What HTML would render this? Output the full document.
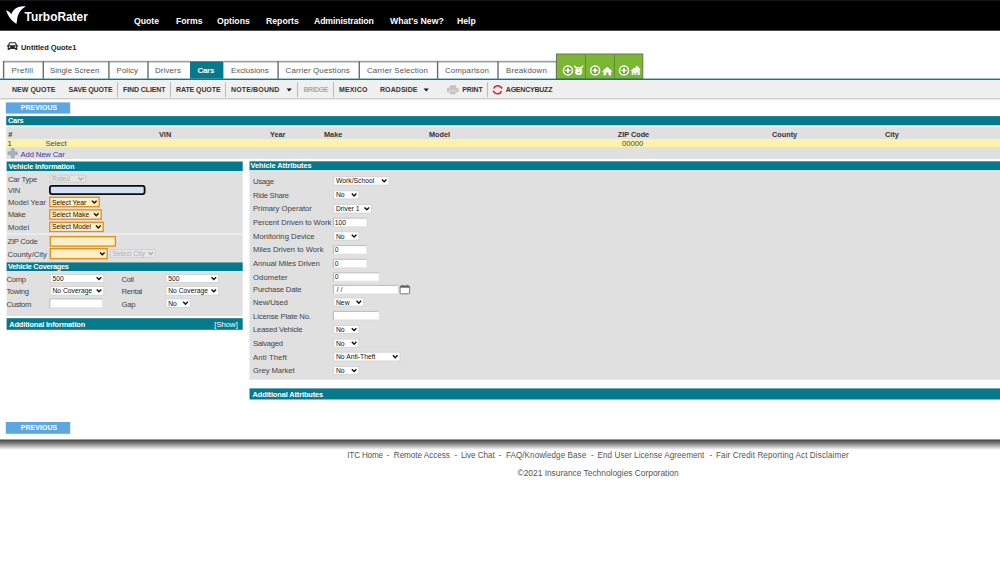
<!DOCTYPE html>
<html lang="en">
<head>
<meta charset="utf-8">
<title>TurboRater - Cars</title>
<style>
*{box-sizing:border-box;margin:0;padding:0}
html,body{width:1000px;height:570px;overflow:hidden;background:#fff}
body{position:relative;font-family:"Liberation Sans",sans-serif;font-size:8px;color:#333}
.a{position:absolute;white-space:nowrap;line-height:12px;height:12px}
#bg{left:0;top:0;height:570px}
#brand{left:24.6px;top:10px;color:#fff;font-weight:bold;font-size:11.9px;line-height:14px;height:14px}
.nav{top:14.7px;color:#fff;font-size:8.7px;font-weight:bold}
#qtitle{left:21px;top:41.8px;font-size:7.45px;font-weight:bold;color:#222}
.tab{top:64.5px;color:#555;font-size:7.9px}
.tab.on{color:#fff;font-weight:bold}
.tb{top:84.1px;font-size:7px;font-weight:bold;color:#333}
.prev{width:64.4px;color:#fff;font-size:6.9px;font-weight:bold;text-align:center}
.hd{color:#fff;font-weight:bold;font-size:7.4px}
.lb{font-size:7.7px;color:#444}
.th{font-size:7.3px;color:#333;font-weight:bold}
.ct{font-size:6.75px;color:#111}
.ft{font-size:8.15px;color:#555}
</style>
</head>
<body>
<svg class="a" id="bg" width="1000" height="570" viewBox="0 0 1000 570">
<rect x="0" y="0" width="1000" height="30.7" fill="#000"/>
<rect x="0" y="0" width="1000" height="1" fill="#141414"/>
<path d="M6.1 10.3C8.2 11 10.2 12.4 11.4 14.3C12.8 10.2 17 5.5 25.7 6.5C22 8.6 19.3 11.8 18 15.2C17 18 17.3 20.9 16.3 23.9C11.5 20.8 7.7 16 6.1 10.3Z" fill="#fff"/>
<g transform="translate(7,42)"><path d="M2.2 .3h6.6l1.3 3h.9v1.2h-.7v3.6h-2v-1.1h-5.6v1.1h-2v-3.6h-.7v-1.2h.9z" fill="#2c2c2c"/><path d="M2.9 1.3h5.2l.7 2h-6.6z" fill="#fff"/><circle cx="2.5" cy="5.1" r=".8" fill="#fff"/><circle cx="8.5" cy="5.1" r=".8" fill="#fff"/></g>
<rect x="3.6" y="61.7" width="552.9" height="17" fill="#fff"/>
<rect x="190" y="61.2" width="33.4" height="17.5" fill="#067a8c"/>
<path d="M2.9 61.7H190M223.4 61.7H556.5" stroke="#a2a2a2" stroke-width="1.8" fill="none"/>
<path d="M3.6 61.2V78.7" stroke="#6c6c6c" stroke-width="1.4"/>
<path d="M43.3 61.2V78.7" stroke="#6c6c6c" stroke-width="1.4"/>
<path d="M108.9 61.2V78.7" stroke="#6c6c6c" stroke-width="1.4"/>
<path d="M148 61.2V78.7" stroke="#6c6c6c" stroke-width="1.4"/>
<path d="M278.1 61.2V78.7" stroke="#6c6c6c" stroke-width="1.4"/>
<path d="M359.3 61.2V78.7" stroke="#6c6c6c" stroke-width="1.4"/>
<path d="M437.6 61.2V78.7" stroke="#6c6c6c" stroke-width="1.4"/>
<path d="M498 61.2V78.7" stroke="#6c6c6c" stroke-width="1.4"/>
<path d="M556.5 61.2V78.7" stroke="#6c6c6c" stroke-width="1.4"/>
<rect x="556.5" y="54" width="86.3" height="25" fill="#7cb734" stroke="#69764f" stroke-width="1"/>
<path d="M585.5 54.5V79M614.4 54.5V79" stroke="#608a3c" stroke-width="1" fill="none"/>
<g fill="#64a01e" stroke="#fff" stroke-width="1.5"><circle cx="567.95" cy="70.4" r="4.45"/><circle cx="595.15" cy="70.4" r="4.45"/><circle cx="624" cy="70.4" r="4.45"/></g>
<g fill="none" stroke="#fff" stroke-width="1.8" stroke-linecap="round"><path d="M566.15 70.4h3.6M567.95 68.6v3.6"/><path d="M593.35 70.4h3.6M595.15 68.6v3.6"/><path d="M622.2 70.4h3.6M624 68.6v3.6"/></g>
<g fill="#fff"><path d="M575.2 72.4C575.2 69.6 575.9 67.6 577.2 67L580.2 67C581.5 67.6 582.2 69.6 582.2 72.4C582.2 74.2 580.7 75 578.7 75C576.7 75 575.2 74.2 575.2 72.4Z"/>
<path d="M577.3 67.4L574.1 65.1L574.2 66.9L576.3 68.7ZM580.1 67.4L583.3 65.1L583.2 66.9L581.1 68.7Z"/>
<path d="M607.3 66.7l5.3 4.7h-1.5v3.8h-2.6v-2.6h-2.4v2.6h-2.6v-3.8h-1.5z"/>
<path d="M637 65.4l3.6 4.3h-.9v5.2h-2v-2.4h-1.7v2.4h-1.4v-5.2h-1.2z"/>
<path d="M634 67.8l3.2 3.3h-.9v3.8h-1.6v-1.9h-1.5v1.9h-1.5v-3.8h-1.1z"/></g>
<g fill="#6aa522"><circle cx="578.7" cy="68.6" r=".7"/><ellipse cx="578.7" cy="72.3" rx="1" ry=".6"/></g>
<rect x="0" y="78.6" width="1000" height="1.5" fill="#067a8c"/>
<rect x="0" y="80.1" width="1000" height="19.2" fill="#f0f0f0"/>
<rect x="0" y="98.1" width="1000" height="1.2" fill="#c8c8c8"/>
<path d="M117.5 82.3V97.2" stroke="#bdbdbd" stroke-width="1.1"/>
<path d="M170.5 82.3V97.2" stroke="#bdbdbd" stroke-width="1.1"/>
<path d="M225.5 82.3V97.2" stroke="#bdbdbd" stroke-width="1.1"/>
<path d="M297.5 82.3V97.2" stroke="#bdbdbd" stroke-width="1.1"/>
<path d="M333.5 82.3V97.2" stroke="#bdbdbd" stroke-width="1.1"/>
<path d="M487.5 82.3V97.2" stroke="#bdbdbd" stroke-width="1.1"/>
<path d="M286.6 88.6h5.2l-2.6 3z" fill="#111"/>
<path d="M423.6 88.6h5.2l-2.6 3z" fill="#111"/>
<g fill="#c4c4c4"><rect x="449.5" y="85.3" width="6.5" height="3" rx=".5"/><rect x="447" y="87.8" width="11.6" height="4.6" rx="1"/><rect x="449.5" y="91" width="6.5" height="3.7" stroke="#f0f0f0" stroke-width=".6"/></g>
<g transform="translate(497.6,89.7)"><g fill="none" stroke="#d6232f" stroke-width="1.5"><path d="M-3.9 -1.2A4.1 4.1 0 0 1 3.5 -2.1"/><path d="M3.9 1.2A4.1 4.1 0 0 1 -3.5 2.1"/></g><path d="M2.3 -2.9L5 -2.6L4.2 -.2z" fill="#d6232f"/><path d="M-2.3 2.9L-5 2.6L-4.2 .2z" fill="#d6232f"/></g>
<rect x="5.8" y="102.4" width="64.4" height="11.2" fill="#5ca6e2"/>
<rect x="5.8" y="422" width="64.4" height="11.8" fill="#5ca6e2"/>
<rect x="6.2" y="116.1" width="993.8" height="9.2" fill="#067a8c"/>
<rect x="6.2" y="126.8" width="993.8" height="12.2" fill="#e0e0e0"/>
<rect x="6.2" y="139" width="993.8" height="8" fill="#fcf2ac"/>
<rect x="6.2" y="147" width="993.8" height="12" fill="#e0e0e0"/>
<path d="M11.2 148.6h3v3.2h3.2v3h-3.2v3.2h-3v-3.2h-3.2v-3h3.2z" fill="#a3b1c0" stroke="#8f9dae" stroke-width=".5"/>
<rect x="6.6" y="161.5" width="236.1" height="9.5" fill="#067a8c"/>
<rect x="6.6" y="171" width="236.1" height="62.7" fill="#e0e0e0"/>
<rect x="6.6" y="233.7" width="236.1" height="0.8" fill="#f2f2f2"/>
<rect x="6.6" y="234.5" width="236.1" height="27.9" fill="#e0e0e0"/>
<rect x="6.6" y="262.4" width="236.1" height="8.6" fill="#067a8c"/>
<rect x="6.6" y="271" width="236.1" height="45" fill="#e0e0e0"/>
<rect x="6.6" y="318.2" width="236.1" height="11.6" fill="#067a8c"/>
<rect x="249.5" y="161.3" width="750.5" height="9" fill="#067a8c"/>
<rect x="249.5" y="170.3" width="750.5" height="209.4" fill="#e0e0e0"/>
<rect x="249.5" y="388.4" width="750.5" height="11.1" fill="#067a8c"/>
<rect x="50" y="175.2" width="35.5" height="7.3" fill="#e5e5e5" stroke="#cdcdcd" stroke-width=".8"/>
<path d="M78.5 177.55L80.8 179.95L83.1 177.55" fill="none" stroke="#b0b0b0" stroke-width="1.4"/>
<rect x="49.9" y="185.9" width="94.7" height="8.2" rx="2" fill="#d2e1f8" stroke="#0c0c0c" stroke-width="1.8"/>
<rect x="49.8" y="197.3" width="49.4" height="9.4" fill="#fdefc6" stroke="#e58a12" stroke-width="1.3"/>
<path d="M92 200.7L94.3 203.1L96.6 200.7" fill="none" stroke="#111" stroke-width="1.4"/>
<rect x="49.8" y="209.9" width="51.4" height="9.3" fill="#fdefc6" stroke="#e58a12" stroke-width="1.3"/>
<path d="M94 213.25L96.3 215.65L98.6 213.25" fill="none" stroke="#111" stroke-width="1.4"/>
<rect x="49.8" y="222.3" width="53.4" height="9.2" fill="#fdefc6" stroke="#e58a12" stroke-width="1.3"/>
<path d="M96 225.6L98.3 228L100.6 225.6" fill="none" stroke="#111" stroke-width="1.4"/>
<rect x="50.3" y="236.7" width="65.1" height="9.4" fill="#fdefc6" stroke="#e58a12" stroke-width="1.3"/>
<rect x="50.3" y="248.7" width="56.9" height="10" fill="#fdefc6" stroke="#e58a12" stroke-width="1.3"/>
<path d="M100 252.4L102.3 254.8L104.6 252.4" fill="none" stroke="#111" stroke-width="1.4"/>
<rect x="110.5" y="249.5" width="45" height="8" fill="#e5e5e5" stroke="#cdcdcd" stroke-width=".8"/>
<path d="M148.5 252.2L150.8 254.6L153.1 252.2" fill="none" stroke="#b0b0b0" stroke-width="1.4"/>
<rect x="50.2" y="274.4" width="53.6" height="8.2" fill="#fff" stroke="#cfcfcf" stroke-width=".8"/>
<path d="M96.7 277.2L99 279.6L101.3 277.2" fill="none" stroke="#111" stroke-width="1.4"/>
<rect x="50.2" y="286.4" width="53.6" height="8.7" fill="#fff" stroke="#cfcfcf" stroke-width=".8"/>
<path d="M96.7 289.45L99 291.85L101.3 289.45" fill="none" stroke="#111" stroke-width="1.4"/>
<rect x="49.8" y="298.5" width="52.7" height="9.3" fill="#fff"/>
<path d="M49.8 307.8V298.9H102.5" fill="none" stroke="#a8a8a8" stroke-width=".8"/>
<path d="M49.8 307.5H102.2V298.9" fill="none" stroke="#dadada" stroke-width=".6"/>
<rect x="166" y="274.4" width="52.6" height="8.2" fill="#fff" stroke="#cfcfcf" stroke-width=".8"/>
<path d="M211.5 277.2L213.8 279.6L216.1 277.2" fill="none" stroke="#111" stroke-width="1.4"/>
<rect x="166" y="286.4" width="52.6" height="8.7" fill="#fff" stroke="#cfcfcf" stroke-width=".8"/>
<path d="M211.5 289.45L213.8 291.85L216.1 289.45" fill="none" stroke="#111" stroke-width="1.4"/>
<rect x="166" y="298.9" width="24.3" height="8.5" fill="#fff" stroke="#cfcfcf" stroke-width=".8"/>
<path d="M183.2 301.85L185.5 304.25L187.8 301.85" fill="none" stroke="#111" stroke-width="1.4"/>
<rect x="333.8" y="176.4" width="55.2" height="8.7" fill="#fff" stroke="#cfcfcf" stroke-width=".8"/>
<path d="M381.9 179.45L384.2 181.85L386.5 179.45" fill="none" stroke="#111" stroke-width="1.4"/>
<rect x="333.8" y="190.8" width="25.1" height="8.1" fill="#fff" stroke="#cfcfcf" stroke-width=".8"/>
<path d="M351.8 193.55L354.1 195.95L356.4 193.55" fill="none" stroke="#111" stroke-width="1.4"/>
<rect x="333.8" y="204.4" width="37.8" height="8.6" fill="#fff" stroke="#cfcfcf" stroke-width=".8"/>
<path d="M364.5 207.4L366.8 209.8L369.1 207.4" fill="none" stroke="#111" stroke-width="1.4"/>
<rect x="333.4" y="217.7" width="33.6" height="9" fill="#fff"/>
<path d="M333.4 226.7V218.1H367" fill="none" stroke="#a8a8a8" stroke-width=".8"/>
<path d="M333.4 226.4H366.7V218.1" fill="none" stroke="#dadada" stroke-width=".6"/>
<rect x="333.8" y="231.9" width="25.1" height="8.2" fill="#fff" stroke="#cfcfcf" stroke-width=".8"/>
<path d="M351.8 234.7L354.1 237.1L356.4 234.7" fill="none" stroke="#111" stroke-width="1.4"/>
<rect x="333.4" y="245.2" width="33.6" height="9" fill="#fff"/>
<path d="M333.4 254.2V245.6H367" fill="none" stroke="#a8a8a8" stroke-width=".8"/>
<path d="M333.4 253.9H366.7V245.6" fill="none" stroke="#dadada" stroke-width=".6"/>
<rect x="333.4" y="258.9" width="33.6" height="9" fill="#fff"/>
<path d="M333.4 267.9V259.3H367" fill="none" stroke="#a8a8a8" stroke-width=".8"/>
<path d="M333.4 267.6H366.7V259.3" fill="none" stroke="#dadada" stroke-width=".6"/>
<rect x="333.4" y="272.4" width="45.9" height="9" fill="#fff"/>
<path d="M333.4 281.4V272.8H379.3" fill="none" stroke="#a8a8a8" stroke-width=".8"/>
<path d="M333.4 281.1H379V272.8" fill="none" stroke="#dadada" stroke-width=".6"/>
<rect x="333.4" y="285" width="64.9" height="9" fill="#fff"/>
<path d="M333.4 294V285.4H398.3" fill="none" stroke="#a8a8a8" stroke-width=".8"/>
<path d="M333.4 293.7H398V285.4" fill="none" stroke="#dadada" stroke-width=".6"/>
<rect x="333.8" y="298" width="29.8" height="8.1" fill="#fff" stroke="#cfcfcf" stroke-width=".8"/>
<path d="M356.5 300.75L358.8 303.15L361.1 300.75" fill="none" stroke="#111" stroke-width="1.4"/>
<rect x="333.4" y="311" width="45.9" height="9" fill="#fff"/>
<path d="M333.4 320V311.4H379.3" fill="none" stroke="#a8a8a8" stroke-width=".8"/>
<path d="M333.4 319.7H379V311.4" fill="none" stroke="#dadada" stroke-width=".6"/>
<rect x="333.8" y="325.4" width="25.1" height="8.2" fill="#fff" stroke="#cfcfcf" stroke-width=".8"/>
<path d="M351.8 328.2L354.1 330.6L356.4 328.2" fill="none" stroke="#111" stroke-width="1.4"/>
<rect x="333.8" y="339.1" width="25.1" height="8.1" fill="#fff" stroke="#cfcfcf" stroke-width=".8"/>
<path d="M351.8 341.85L354.1 344.25L356.4 341.85" fill="none" stroke="#111" stroke-width="1.4"/>
<rect x="333.8" y="352.2" width="66.2" height="8.8" fill="#fff" stroke="#cfcfcf" stroke-width=".8"/>
<path d="M392.9 355.3L395.2 357.7L397.5 355.3" fill="none" stroke="#111" stroke-width="1.4"/>
<rect x="333.8" y="366.4" width="25.1" height="8.2" fill="#fff" stroke="#cfcfcf" stroke-width=".8"/>
<path d="M351.8 369.2L354.1 371.6L356.4 369.2" fill="none" stroke="#111" stroke-width="1.4"/>
<g transform="translate(399.5,284.6)"><rect x=".6" y="1.3" width="9.5" height="7.9" rx=".8" fill="#fff" stroke="#6e6e6e" stroke-width=".9"/><rect x=".6" y="1.3" width="9.5" height="1.8" fill="#5e5e5e"/><rect x="2.4" y=".2" width="1.1" height="1.8" fill="#6e6e6e"/><rect x="7.2" y=".2" width="1.1" height="1.8" fill="#6e6e6e"/></g>
<defs><linearGradient id="sh" x1="0" y1="0" x2="0" y2="1"><stop offset="0" stop-color="#3e3e3e"/><stop offset=".15" stop-color="#5a5a5a"/><stop offset=".35" stop-color="#7c7c7c"/><stop offset=".55" stop-color="#a6a6a6"/><stop offset=".78" stop-color="#d4d4d4"/><stop offset=".93" stop-color="#f4f4f4"/><stop offset="1" stop-color="#fff"/></linearGradient></defs>
<rect x="0" y="439.5" width="1000" height="10.5" fill="url(#sh)"/>
</svg>
<div class="a" id="brand">TurboRater</div>
<div class="a nav" style="left:134px">Quote</div>
<div class="a nav" style="left:176px">Forms</div>
<div class="a nav" style="left:217px">Options</div>
<div class="a nav" style="left:266px">Reports</div>
<div class="a nav" style="left:314px;letter-spacing:-.12px">Administration</div>
<div class="a nav" style="left:390px">What's New?</div>
<div class="a nav" style="left:457px">Help</div>
<div class="a" id="qtitle">Untitled Quote1</div>
<div class="a tab" style="left:11.4px;letter-spacing:0.321px">Prefill</div>
<div class="a tab" style="left:50px;letter-spacing:0.016px">Single Screen</div>
<div class="a tab" style="left:116.6px;letter-spacing:0.054px">Policy</div>
<div class="a tab" style="left:155px;letter-spacing:0.141px">Drivers</div>
<div class="a tab on" style="left:197.6px;letter-spacing:-0.292px">Cars</div>
<div class="a tab" style="left:231px;letter-spacing:-0.016px">Exclusions</div>
<div class="a tab" style="left:285.6px;letter-spacing:0.147px">Carrier Questions</div>
<div class="a tab" style="left:367px;letter-spacing:0.127px">Carrier Selection</div>
<div class="a tab" style="left:445px;letter-spacing:0.141px">Comparison</div>
<div class="a tab" style="left:506px;letter-spacing:0.164px">Breakdown</div>
<div class="a tb" style="left:12px;letter-spacing:0.026px">NEW QUOTE</div>
<div class="a tb" style="left:68.5px;letter-spacing:-0.138px">SAVE QUOTE</div>
<div class="a tb" style="left:123px;letter-spacing:-0.096px">FIND CLIENT</div>
<div class="a tb" style="left:176px;letter-spacing:-0.087px">RATE QUOTE</div>
<div class="a tb" style="left:231px;letter-spacing:0.144px">NOTE/BOUND</div>
<div class="a tb" style="left:303.5px;color:#aaa;letter-spacing:-0.454px">BRIDGE</div>
<div class="a tb" style="left:339px;letter-spacing:0.148px">MEXICO</div>
<div class="a tb" style="left:380px;letter-spacing:0.069px">ROADSIDE</div>
<div class="a tb" style="left:462.2px;letter-spacing:-0.12px">PRINT</div>
<div class="a tb" style="left:505.8px;letter-spacing:-0.221px">AGENCYBUZZ</div>
<div class="a prev" style="left:6.8px;top:102.3px;letter-spacing:.1px">PREVIOUS</div>
<div class="a prev" style="left:6.8px;top:422.2px;letter-spacing:.1px">PREVIOUS</div>
<div class="a hd" style="left:8.1px;top:115.3px;letter-spacing:-0.314px">Cars</div>
<div class="a th" style="left:8.3px;top:128.5px;">#</div>
<div class="a th" style="left:159px;top:128.5px;">VIN</div>
<div class="a th" style="left:270px;top:128.5px;">Year</div>
<div class="a th" style="left:324px;top:128.5px;">Make</div>
<div class="a th" style="left:429px;top:128.5px;">Model</div>
<div class="a th" style="left:617.7px;top:128.5px;">ZIP Code</div>
<div class="a th" style="left:772px;top:128.5px;">County</div>
<div class="a th" style="left:885px;top:128.5px;">City</div>
<div class="a lb" style="left:7.6px;top:138.1px;color:#333">1</div>
<div class="a lb" style="left:45.4px;top:138.1px;color:#3c3c9c">Select</div>
<div class="a lb" style="left:622px;top:138.1px;color:#444">00000</div>
<div class="a lb" style="left:20.6px;top:148.6px;color:#3c3c9c;letter-spacing:-.15px">Add New Car</div>
<div class="a hd" style="left:8.5px;top:160.9px;letter-spacing:-0.119px">Vehicle Information</div>
<div class="a hd" style="left:8px;top:261.4px;letter-spacing:-0.271px">Vehicle Coverages</div>
<div class="a hd" style="left:9.3px;top:318.7px;letter-spacing:-0.138px">Additional Information</div>
<div class="a hd" style="left:214.3px;top:318.7px;font-weight:normal;font-size:7.7px">[Show]</div>
<div class="a hd" style="left:250.6px;top:160.2px;letter-spacing:-0.063px">Vehicle Attributes</div>
<div class="a hd" style="left:252.6px;top:388.7px;letter-spacing:-0.11px">Additional Attributes</div>
<div class="a lb" style="left:8px;top:174.1px;letter-spacing:-0.238px">Car Type</div>
<div class="a ct" style="left:52.1px;top:173.35px;color:#b0b0b0">Rated</div>
<div class="a lb" style="left:8px;top:184.9px;letter-spacing:-0.3px">VIN</div>
<div class="a lb" style="left:8px;top:196.9px;letter-spacing:-0.053px">Model Year</div>
<div class="a ct" style="left:52.1px;top:196.5px;">Select Year</div>
<div class="a lb" style="left:8px;top:209.4px;letter-spacing:-0.3px">Make</div>
<div class="a ct" style="left:52.1px;top:209.05px;">Select Make</div>
<div class="a lb" style="left:8px;top:221.9px;letter-spacing:0.045px">Model</div>
<div class="a ct" style="left:52.1px;top:221.4px;">Select Model</div>
<div class="a lb" style="left:7.5px;top:236.1px;letter-spacing:-0.3px">ZIP Code</div>
<div class="a lb" style="left:7.5px;top:248.6px;letter-spacing:-0.036px">County/City</div>
<div class="a ct" style="left:112.6px;top:248px;color:#b0b0b0">Select City</div>
<div class="a lb" style="left:6.5px;top:273.6px;letter-spacing:-0.3px">Comp</div>
<div class="a ct" style="left:52.4px;top:273px;">500</div>
<div class="a lb" style="left:6.5px;top:286.1px;letter-spacing:-0.3px">Towing</div>
<div class="a ct" style="left:52.4px;top:285.25px;">No Coverage</div>
<div class="a lb" style="left:6.5px;top:298.6px;letter-spacing:-0.3px">Custom</div>
<div class="a lb" style="left:121.6px;top:273.6px;letter-spacing:-0.3px">Coll</div>
<div class="a ct" style="left:168.2px;top:273px;">500</div>
<div class="a lb" style="left:121.6px;top:286.1px;letter-spacing:-0.3px">Rental</div>
<div class="a ct" style="left:168.2px;top:285.25px;">No Coverage</div>
<div class="a lb" style="left:121.6px;top:298.6px;letter-spacing:-0.3px">Gap</div>
<div class="a ct" style="left:168.2px;top:297.65px;">No</div>
<div class="a lb" style="left:253px;top:175.9px;letter-spacing:-0.3px">Usage</div>
<div class="a ct" style="left:336px;top:175.25px;">Work/School</div>
<div class="a lb" style="left:253px;top:189.6px;letter-spacing:-0.272px">Ride Share</div>
<div class="a ct" style="left:336px;top:189.35px;">No</div>
<div class="a lb" style="left:253px;top:203.3px;letter-spacing:-0.003px">Primary Operator</div>
<div class="a ct" style="left:336px;top:203.2px;">Driver 1</div>
<div class="a lb" style="left:253px;top:217px;letter-spacing:-0.052px">Percent Driven to Work</div>
<div class="a ct" style="left:334.8px;top:216.6px;">100</div>
<div class="a lb" style="left:253px;top:230.6px;letter-spacing:0.004px">Monitoring Device</div>
<div class="a ct" style="left:336px;top:230.5px;">No</div>
<div class="a lb" style="left:253px;top:244.3px;letter-spacing:-0.014px">Miles Driven to Work</div>
<div class="a ct" style="left:334.8px;top:244.1px;">0</div>
<div class="a lb" style="left:253px;top:258px;letter-spacing:-0.088px">Annual Miles Driven</div>
<div class="a ct" style="left:334.8px;top:257.8px;">0</div>
<div class="a lb" style="left:253px;top:271.8px;letter-spacing:0.07px">Odometer</div>
<div class="a ct" style="left:334.8px;top:271.3px;">0</div>
<div class="a lb" style="left:253px;top:284.4px;letter-spacing:-0.195px">Purchase Date</div>
<div class="a ct" style="left:334.8px;top:283.9px;">&nbsp;/ /</div>
<div class="a lb" style="left:253px;top:297.1px;letter-spacing:-0.09px">New/Used</div>
<div class="a ct" style="left:336px;top:296.55px;">New</div>
<div class="a lb" style="left:253px;top:310.8px;letter-spacing:-0.144px">License Plate No.</div>
<div class="a lb" style="left:253px;top:324.2px;letter-spacing:-0.195px">Leased Vehicle</div>
<div class="a ct" style="left:336px;top:324px;">No</div>
<div class="a lb" style="left:253px;top:338.1px;letter-spacing:-0.3px">Salvaged</div>
<div class="a ct" style="left:336px;top:337.65px;">No</div>
<div class="a lb" style="left:253px;top:351.6px;letter-spacing:0.128px">Anti Theft</div>
<div class="a ct" style="left:336px;top:351.1px;">No Anti-Theft</div>
<div class="a lb" style="left:253px;top:365.3px;letter-spacing:-0.06px">Grey Market</div>
<div class="a ct" style="left:336px;top:365px;">No</div>
<div class="a ft" style="left:347.3px;top:449.6px;letter-spacing:-0.191px">ITC Home</div>
<div class="a ft" style="left:386.8px;top:449.6px;">-</div>
<div class="a ft" style="left:393.8px;top:449.6px;letter-spacing:-0.032px">Remote Access</div>
<div class="a ft" style="left:454.5px;top:449.6px;">-</div>
<div class="a ft" style="left:460.9px;top:449.6px;letter-spacing:-0.07px">Live Chat</div>
<div class="a ft" style="left:498.8px;top:449.6px;">-</div>
<div class="a ft" style="left:505.9px;top:449.6px;letter-spacing:0.048px">FAQ/Knowledge Base</div>
<div class="a ft" style="left:591px;top:449.6px;">-</div>
<div class="a ft" style="left:597.6px;top:449.6px;letter-spacing:0.042px">End User License Agreement</div>
<div class="a ft" style="left:709.5px;top:449.6px;">-</div>
<div class="a ft" style="left:716px;top:449.6px;letter-spacing:0.102px">Fair Credit Reporting Act Disclaimer</div>
<div class="a ft" style="left:517.5px;top:467.2px;font-size:8.4px">©2021 Insurance Technologies Corporation</div>
</body>
</html>
